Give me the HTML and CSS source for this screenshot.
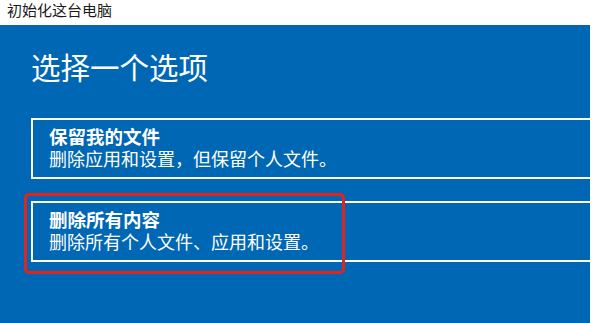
FILE: index.html
```html
<!DOCTYPE html>
<html lang="zh-CN">
<head>
<meta charset="utf-8">
<title>初始化这台电脑</title>
<link rel="stylesheet" href="styles.css">
</head>
<body>
<div class="window">
  <header class="titlebar">初始化这台电脑</header>
  <main class="panel">
    <h1 class="heading">选择一个选项</h1>
    <div class="option">
      <div class="option-title">保留我的文件</div>
      <div class="option-desc">删除应用和设置，但保留个人文件。</div>
    </div>
    <div class="option option-marked">
      <div class="option-title">删除所有内容</div>
      <div class="option-desc">删除所有个人文件、应用和设置。</div>
      <span class="highlight"></span>
    </div>
  </main>
</div>
</body>
</html>
```
FILE: styles.css
```css
html, body {
  margin: 0;
  padding: 0;
  background: #ffffff;
}
body {
  font-family: "Noto Sans CJK SC", "Noto Sans", sans-serif;
  width: 600px;
  height: 323px;
  overflow: hidden;
}
.window {
  display: flex;
  flex-direction: column;
  height: 323px;
}
.titlebar {
  height: 25px;
  box-sizing: border-box;
  padding-left: 7px;
  font-size: 15px;
  line-height: 19px;
  color: #1a1a1a;
}
.panel {
  flex: 1;
  width: 590px;
  background: #0067b4;
  overflow: hidden;
  box-sizing: border-box;
  padding: 23px 0 0 31px;
  display: flex;
  flex-direction: column;
}
.heading {
  margin: 0 0 34px 0;
  font-size: 29.5px;
  line-height: 36px;
  font-weight: 400;
  color: #ffffff;
}
.option {
  position: relative;
  width: 600px;
  box-sizing: border-box;
  border: 2px solid #ffffff;
  padding: 5px 16px 7px 16px;
  color: #ffffff;
  margin-bottom: 22px;
}
.option-title {
  font-size: 18.5px;
  line-height: 22px;
  font-weight: 700;
}
.option-desc {
  font-size: 18px;
  line-height: 23px;
  font-weight: 400;
}
.highlight {
  position: absolute;
  left: -9px;
  top: -10px;
  width: 321px;
  height: 81px;
  box-sizing: border-box;
  border: 3px solid #e5231d;
  border-radius: 5px;
}
```
